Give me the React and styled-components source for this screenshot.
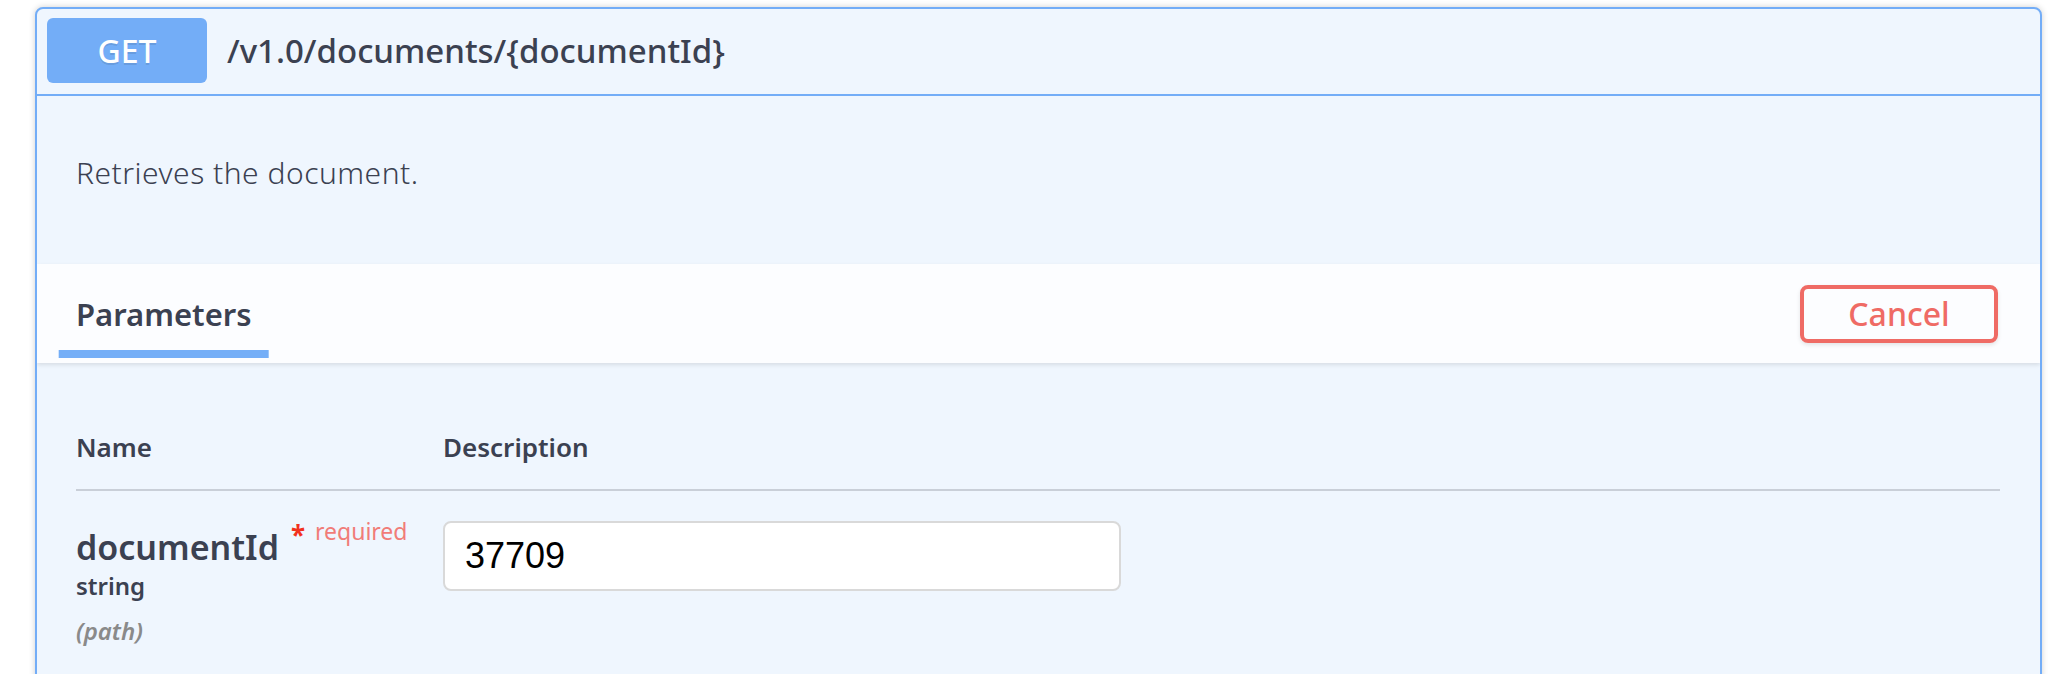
import React from 'react';
import styled, { createGlobalStyle } from 'styled-components';

const GlobalStyle = createGlobalStyle`
  body {
    margin: 0;
    background: #ffffff;
    font-family: "Noto Sans", "Noto Sans CJK JP", sans-serif;
    color: #3b4151;
  }
`;

const Page = styled.div`
  padding: 7px 18px 0 35px;
`;

const Block = styled.div`
  border: 2px solid #73adf7;
  border-radius: 8px;
  background: #eff6fe;
  box-shadow: 0 0 6px rgba(0, 0, 0, 0.19);
  overflow: hidden;
`;

const Summary = styled.div`
  display: flex;
  align-items: center;
  padding: 9px 10px 11px;
  border-bottom: 2px solid #73adf7;
`;

const Method = styled.span`
  display: inline-flex;
  align-items: center;
  justify-content: center;
  width: 160px;
  height: 65px;
  border-radius: 6px;
  background: #73adf7;
  color: #ffffff;
  font-size: 32px;
  font-weight: 500;
  text-shadow: 0 2px 0 rgba(0, 0, 0, 0.1);
`;

const Path = styled.span`
  margin-left: 20px;
  font-size: 33px;
  font-weight: 500;
  color: #3b4151;
`;

const Description = styled.div`
  padding: 56px 39px 70px;
  font-size: 30px;
  font-weight: 300;
  letter-spacing: 0.5px;
  line-height: 42px;
  p {
    margin: 0;
  }
`;

const SectionHeader = styled.div`
  position: relative;
  display: flex;
  align-items: center;
  justify-content: space-between;
  min-height: 99px;
  padding: 0 42px 0 39px;
  background: rgba(255, 255, 255, 0.8);
  box-shadow: 0 2px 4px rgba(0, 0, 0, 0.1);
`;

const Tab = styled.h4`
  position: relative;
  margin: 0;
  font-size: 31px;
  font-weight: 600;
  line-height: 40px;
  color: #3b4151;

  &::after {
    content: '';
    position: absolute;
    left: 50%;
    top: calc(100% + 16px);
    width: 120%;
    height: 8px;
    transform: translateX(-50%);
    background: ${({ $active }) => ($active ? '#74aef7' : 'transparent')};
  }
`;

const CancelButton = styled.button`
  width: 198px;
  height: 58px;
  padding: 0;
  border: 4px solid #ef6b65;
  border-radius: 8px;
  background: transparent;
  color: #ef6b65;
  font-family: inherit;
  font-size: 32px;
  font-weight: 500;
  box-shadow: 0 2px 4px rgba(0, 0, 0, 0.1);
  cursor: pointer;
`;

const TableContainer = styled.div`
  padding: 42px 40px 40px 39px;
`;

const Table = styled.table`
  width: 100%;
  border-collapse: collapse;
`;

const Th = styled.th`
  width: ${({ $width }) => $width || 'auto'};
  padding: 24px 0;
  border-bottom: 2px solid #c9cfd8;
  text-align: left;
  font-size: 26px;
  font-weight: 600;
  line-height: 36px;
  color: #3b4151;
`;

const Td = styled.td`
  padding: 20px 0;
  vertical-align: top;
`;

const ParamName = styled.div`
  font-size: 34px;
  font-weight: 600;
  line-height: 41px;
  color: #3b4151;
  white-space: nowrap;
`;

const Star = styled.span`
  margin-left: 12px;
  font-size: 26px;
  font-weight: 700;
  color: #f2311d;
  vertical-align: 15px;
`;

const Required = styled.span`
  margin-left: 10px;
  font-size: 23px;
  font-weight: 400;
  color: #f17c78;
  vertical-align: 20px;
`;

const ParamType = styled.div`
  padding-top: 0;
  font-size: 24px;
  font-weight: 600;
  line-height: 36px;
  color: #3b4151;
`;

const ParamIn = styled.div`
  padding-top: 9px;
  font-size: 24px;
  font-weight: 600;
  font-style: italic;
  line-height: 36px;
  color: #8a8a8a;
`;

const Input = styled.input`
  box-sizing: border-box;
  width: 678px;
  height: 70px;
  margin-top: 10px;
  padding: 0 20px;
  border: 2px solid #d9d9d9;
  border-radius: 8px;
  background: #ffffff;
  font-family: "Liberation Sans", Arial, sans-serif;
  font-size: 36px;
  color: #000000;
  outline: none;
`;

const App = () => (
  <Page>
    <GlobalStyle />
    <Block>
      <Summary>
        <Method>GET</Method>
        <Path>/v1.0/documents/{'{documentId}'}</Path>
      </Summary>
      <Description>
        <p>Retrieves the document.</p>
      </Description>
      <SectionHeader>
        <Tab $active>Parameters</Tab>
        <CancelButton>Cancel</CancelButton>
      </SectionHeader>
      <TableContainer>
        <Table>
          <thead>
            <tr>
              <Th $width="367px">Name</Th>
              <Th>Description</Th>
            </tr>
          </thead>
          <tbody>
            <tr>
              <Td>
                <ParamName>
                  documentId
                  <Star>*</Star>
                  <Required>required</Required>
                </ParamName>
                <ParamType>string</ParamType>
                <ParamIn>(path)</ParamIn>
              </Td>
              <Td>
                <Input defaultValue="37709" />
              </Td>
            </tr>
          </tbody>
        </Table>
      </TableContainer>
    </Block>
  </Page>
);

export default App;
